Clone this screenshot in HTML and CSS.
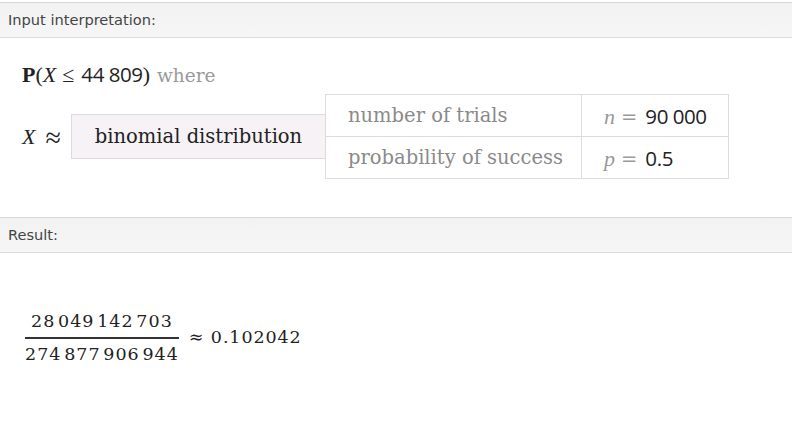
FILE: index.html
```html
<!DOCTYPE html>
<html>
<head>
<meta charset="utf-8">
<link rel="stylesheet" href="styles.css">
</head>
<body>
<section class="pod">
  <div class="pod-header">Input interpretation:</div>
  <div class="pod-body input-body">
    <div class="prob-line"><span class="bb">P</span>(<i>X</i><span class="le">≤</span><span class="num">44&#8197;809</span>)<span class="where">where</span></div>
    <div class="dist-row">
      <div class="dist-sym"><i>X</i><span class="distr">≈</span></div>
      <div class="dist-box">binomial distribution</div>
      <table class="params">
        <tr><td class="pname">number of trials</td><td class="pval"><i class="var">n</i><span class="eq">=</span><span class="num">90&#8197;000</span></td></tr>
        <tr><td class="pname">probability of success</td><td class="pval"><i class="var">p</i><span class="eq">=</span><span class="num">0.5</span></td></tr>
      </table>
    </div>
  </div>
</section>
<section class="pod">
  <div class="pod-header">Result:</div>
  <div class="pod-body result-body">
    <div class="result-line">
      <div class="frac">
        <span class="numer">28&#8202;049&#8202;142&#8202;703</span>
        <span class="denom">274&#8202;877&#8202;906&#8202;944</span>
      </div>
      <span class="approx">≈ 0.102042</span>
    </div>
  </div>
</section>
</body>
</html>
```
FILE: styles.css
```css
html, body {
  margin: 0;
  padding: 0;
  background: #fff;
}
body {
  padding-top: 2px;
}
.pod-header {
  height: 34px;
  line-height: 33px;
  padding-left: 8px;
  border-top: 1px solid #d6d6d6;
  border-bottom: 1px solid #dcdcdc;
  background: linear-gradient(#f2f2f2, #f6f6f6);
  font-family: "DejaVu Sans", Verdana, sans-serif;
  font-size: 14.6px;
  color: #444;
}
.input-body {
  height: 179px;
  padding-left: 22px;
  box-sizing: border-box;
  padding-top: 22px;
}
.prob-line {
  font-family: "Liberation Serif", serif;
  font-size: 22px;
  color: #222;
  height: 34px;
}
.bb {
  font-weight: bold;
}
.le {
  margin: 0 7px 0 6px;
}
.num {
  font-family: "Open Sans", sans-serif;
  font-size: 20.5px;
  letter-spacing: -0.4px;
  color: #222;
}
.where {
  margin-left: 7px;
  color: #999;
  font-family: "DejaVu Serif", serif;
  font-size: 18.5px;
}
.dist-row {
  display: flex;
  align-items: center;
}
.dist-sym {
  width: 49px;
  font-family: "Liberation Serif", serif;
  font-size: 22px;
  color: #222;
}
.distr {
  margin-left: 10px;
  font-size: 28px;
  line-height: 20px;
  vertical-align: -3px;
}
.dist-box {
  width: 254px;
  height: 45px;
  box-sizing: border-box;
  border: 1px solid #dcdcdc;
  border-right: none;
  background: #f7f2f5;
  display: flex;
  align-items: center;
  justify-content: center;
  font-family: "DejaVu Serif", serif;
  font-size: 19.5px;
  color: #222;
}
.params {
  border-collapse: collapse;
  table-layout: fixed;
  font-family: "DejaVu Serif", serif;
  font-size: 19.5px;
}
.params td {
  border: 1px solid #dcdcdc;
  height: 42px;
  padding: 0 0 0 22px;
  box-sizing: border-box;
}
.pname {
  width: 256px;
  color: #8a8a8a;
}
.pval {
  width: 147px;
  color: #222;
}
.var {
  color: #999;
  font-family: "Liberation Serif", serif;
  font-size: 22px;
}
.eq {
  color: #999;
  margin: 0 8px 0 6px;
}
.result-body {
  padding: 58px 0 0 25px;
}
.result-line {
  display: flex;
  align-items: flex-start;
}
.frac {
  display: flex;
  flex-direction: column;
  align-items: center;
  font-family: "DejaVu Serif", serif;
  font-size: 17.5px;
  color: #222;
  letter-spacing: 1px;
}
.numer {
  line-height: 20px;
  padding-bottom: 6px;
  border-bottom: 2px solid #333;
  align-self: stretch;
  text-align: center;
}
.denom {
  line-height: 20px;
  padding-top: 5px;
}
.approx {
  margin: 16px 0 0 10px;
  line-height: 20px;
  font-family: "DejaVu Serif", serif;
  font-size: 17.5px;
  letter-spacing: 0.9px;
  color: #222;
}
```
